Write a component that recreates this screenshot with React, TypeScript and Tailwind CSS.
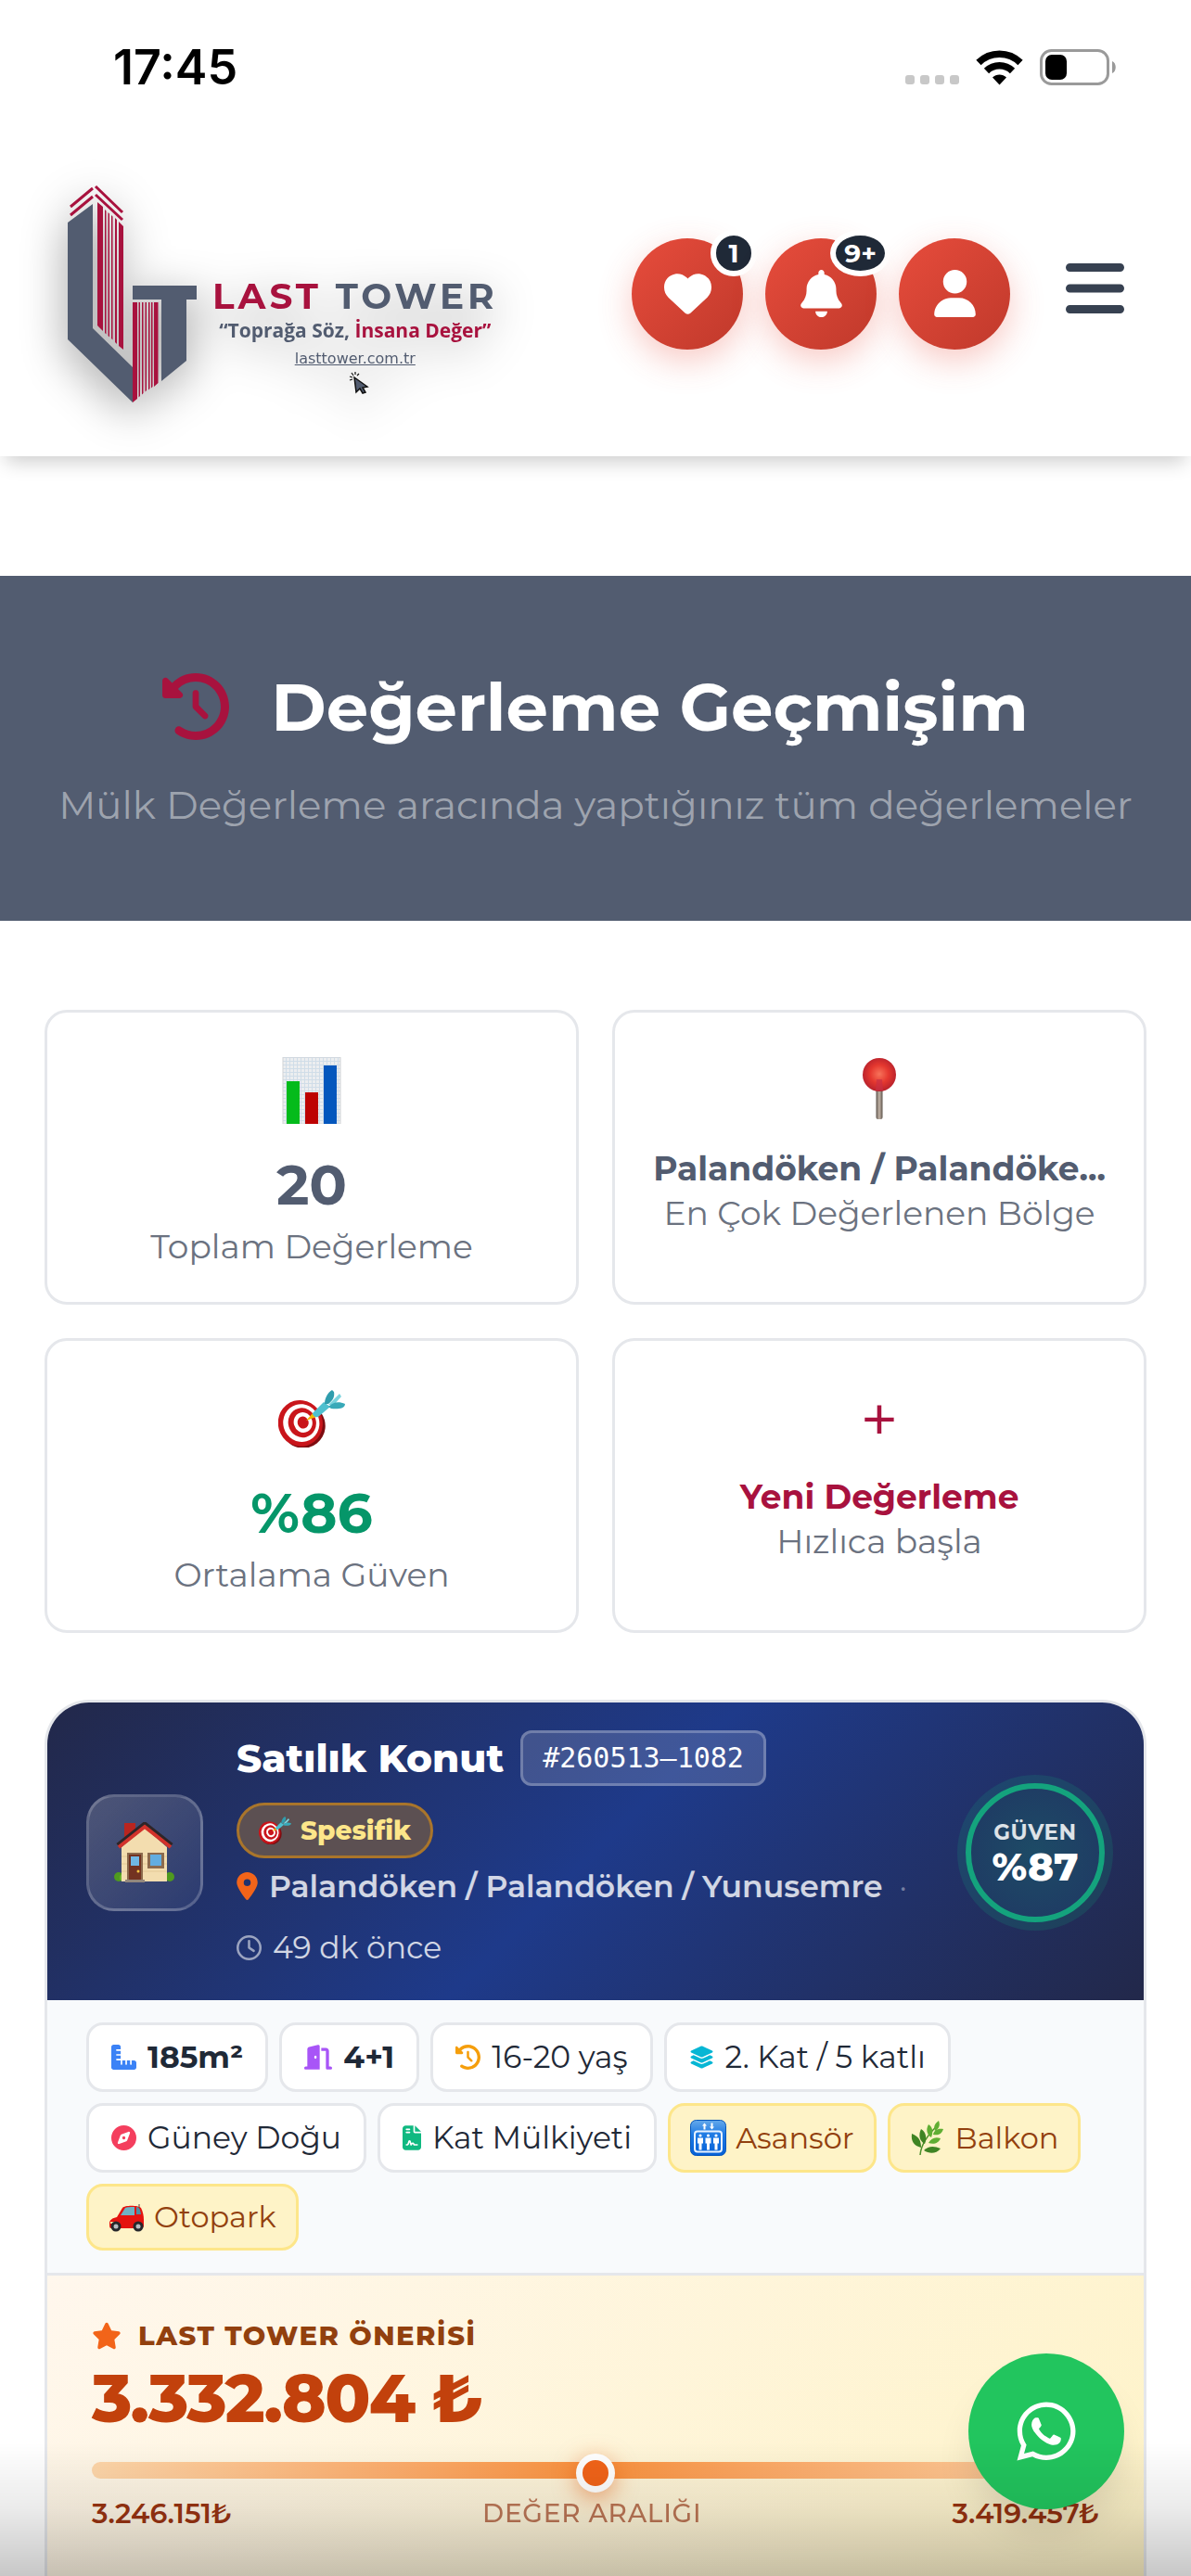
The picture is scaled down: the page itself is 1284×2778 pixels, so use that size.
import type { ReactNode } from "react";
import {
  FaBars,
  FaBell,
  FaClockRotateLeft,
  FaCompass,
  FaDoorOpen,
  FaFileContract,
  FaHeart,
  FaLayerGroup,
  FaLocationDot,
  FaRegClock,
  FaRulerCombined,
  FaStar,
  FaUser,
  FaWhatsapp,
} from "react-icons/fa6";

/* ---------- illustrations ---------- */

function ChartEmoji({ className }: { className?: string }) {
  return (
    <svg viewBox="0 0 72 72" className={className} aria-hidden="true">
      <defs>
        <pattern id="chart-grid" width="4" height="4" patternUnits="userSpaceOnUse">
          <rect width="4" height="4" fill="#eceef0" />
          <path d="M0 .5h4M.5 0v4" stroke="#d0dde8" strokeWidth="1" />
        </pattern>
      </defs>
      <rect x="5" y="0" width="62" height="72" fill="url(#chart-grid)" stroke="#d2d4d6" />
      <rect x="9" y="26" width="14" height="46" fill="#04bb1b" />
      <rect x="29" y="38" width="14" height="34" fill="#bd0202" />
      <rect x="49" y="9" width="14" height="63" fill="#0457bd" />
    </svg>
  );
}

function PinEmoji({ className }: { className?: string }) {
  return (
    <svg viewBox="0 0 72 72" className={className} aria-hidden="true">
      <defs>
        <radialGradient id="pin-head" cx="50%" cy="48%" r="55%">
          <stop offset="0" stopColor="#f7735a" />
          <stop offset="0.5" stopColor="#e5382f" />
          <stop offset="1" stopColor="#b31f2c" />
        </radialGradient>
        <linearGradient id="pin-stem">
          <stop offset="0" stopColor="#5d534c" />
          <stop offset="0.5" stopColor="#c4b5a8" />
          <stop offset="1" stopColor="#5d534c" />
        </linearGradient>
      </defs>
      <rect x="32.500" y="33" width="7" height="34" rx="2" fill="url(#pin-stem)" />
      <circle cx="36" cy="19" r="18" fill="url(#pin-head)" />
      <path d="M33 24h6l1 12h-8z" fill="#c92f45" opacity="0.7" />
    </svg>
  );
}

function TargetEmoji({ className }: { className?: string }) {
  return (
    <svg viewBox="0 0 72 62" className={className} aria-hidden="true">
      <g transform="rotate(-16 27 36)">
        <ellipse cx="26" cy="38.500" rx="24" ry="24" fill="#7d0c10" />
        <ellipse cx="24" cy="35" rx="24" ry="25" fill="#c9151b" />
        <ellipse cx="25" cy="35" rx="19.500" ry="20.500" fill="#fff" />
        <ellipse cx="26" cy="35" rx="15" ry="16" fill="#c9151b" />
        <ellipse cx="27" cy="35" rx="10" ry="11" fill="#fff" />
        <ellipse cx="27" cy="35" rx="6" ry="6.500" fill="#c9151b" />
      </g>
      <path d="M30 33l7-8 4 4z" fill="#f2b705" />
      <path d="M37 25l12-12 7 5-13 11c-3 1-6-1-6-4z" fill="#4fc0cf" />
      <path d="M50 15c0-6 3-12 8-15l2 2c1 5-1 9-6 13z" fill="#2f9dad" />
      <path d="M54 16l12-12 2 3-8 9z" fill="#7ad3dd" />
      <path d="M54 18c5-5 11-6 18-3 0 5-8 6-15 5z" fill="#38a9b8" />
    </svg>
  );
}

function HouseEmoji({ className }: { className?: string }) {
  return (
    <svg viewBox="0 0 66 66" className={className} aria-hidden="true">
      <circle cx="5" cy="59" r="5" fill="#4f9a1e" />
      <circle cx="10" cy="60" r="4" fill="#6bb32b" />
      <circle cx="60" cy="59" r="5" fill="#4f9a1e" />
      <path d="M11 1h12v14l-12 9z" fill="#b9251f" />
      <path d="M8 27L33 6l24 21v37H8z" fill="#f3ddaf" />
      <path d="M8 37h49M8 45h49M8 53h49" stroke="#e4ca97" strokeWidth="1" />
      <path d="M4 25L33 2l29 23" fill="none" stroke="#2e2528" strokeWidth="5" />
      <path d="M5 27L33 5l28 22" fill="none" stroke="#d2322b" strokeWidth="4" />
      <rect x="14" y="33" width="17" height="31" fill="#8c6a4d" />
      <rect x="16" y="35" width="13" height="29" fill="#733321" />
      <rect x="18" y="37" width="9" height="10" fill="#70b8e4" />
      <circle cx="26" cy="53" r="1.500" fill="#f5c542" />
      <rect x="36" y="33" width="18" height="17" fill="#8c6a4d" />
      <rect x="39" y="35" width="12" height="12" fill="#62ade0" />
      <rect x="12" y="62" width="21" height="3" fill="#93877c" />
    </svg>
  );
}

function ElevatorEmoji({ className }: { className?: string }) {
  return (
    <svg viewBox="0 0 39 39" className={className} aria-hidden="true">
      <defs>
        <linearGradient id="elevator-bg" x2="0" y2="1">
          <stop offset="0" stopColor="#65a9ea" />
          <stop offset="0.4" stopColor="#1f7be4" />
          <stop offset="1" stopColor="#0560d6" />
        </linearGradient>
      </defs>
      <rect x="0.5" y="0.5" width="38" height="38" rx="6" fill="url(#elevator-bg)" stroke="#0757bb" />
      <path d="M15.500 3.500l2.500 3h-1.500v4h-2v-4H13zM23.500 10.500l2.500-3h-1.500v-4h-2v4H21z" fill="#fff" />
      <rect x="5" y="12.500" width="29" height="22" rx="3" fill="none" stroke="#e9f3ff" strokeWidth="2" />
      {[11, 19.5, 28].map((x) => (
        <g key={x} fill="#fff">
          <circle cx={x} cy="17" r="1.600" />
          <path d={`M${x - 3} 19.500h6v6h-1.500v7h-3v-7h-1.500z`} />
        </g>
      ))}
    </svg>
  );
}

function HerbEmoji({ className }: { className?: string }) {
  return (
    <svg viewBox="0 0 39 39" className={className} aria-hidden="true">
      <path d="M11 38c1-12 8-22 20-33" fill="none" stroke="#4c8f2a" strokeWidth="1.500" />
      <g fill="#5fae33">
        <path d="M31 1c2 5 0 9-4 11-2-5 0-8 4-11z" />
        <path d="M20 5c5 3 5 9 3 14-5-3-6-9-3-14z" />
        <path d="M36 10c-2 6-6 7-11 6 1-5 5-7 11-6z" />
        <path d="M33 20c-2 5-7 7-13 5 3-5 7-7 13-5z" />
      </g>
      <g fill="#3f8424">
        <path d="M12 10c6 4 6 10 4 16-6-3-7-10-4-16z" />
        <path d="M2 15c8 3 10 8 10 15C4 28 1 23 2 15z" />
        <path d="M33 31c-5 6-12 6-18 2 5-5 11-5 18-2z" />
      </g>
    </svg>
  );
}

function CarEmoji({ className }: { className?: string }) {
  return (
    <svg viewBox="0 0 39 31" className={className} aria-hidden="true">
      <path d="M33 1v4" stroke="#444" strokeWidth="1" />
      <path d="M1 22c0-4 3-6 8-7l6-10c2-3 17-3 20 0 2 4 3 8 3 13v6c0 2-1 3-3 3H3c-2 0-2-2-2-5z" fill="#e5130f" />
      <path d="M13 13l5-8c1-1 7-1 10-1v9z" fill="#6fb2c4" />
      <path d="M30 4c3 0 4 2 5 8h-5z" fill="#4f8ea2" />
      <path d="M2 21h8" stroke="#fbe3a2" strokeWidth="2" />
      <circle cx="8" cy="25" r="5.500" fill="#26272b" />
      <circle cx="8" cy="25" r="2.500" fill="#b8bcc2" />
      <circle cx="32" cy="25" r="5.500" fill="#26272b" />
      <circle cx="32" cy="25" r="2.500" fill="#b8bcc2" />
    </svg>
  );
}

function LogoMark({ className }: { className?: string }) {
  return (
    <svg viewBox="0 0 141 236" className={className} aria-hidden="true">
      <g fill="#525c70">
        <path d="M1 41L28 21V155L71 197V235L1 167Z" />
        <path d="M71 109H140V124H129V190L102 212V124H71Z" />
      </g>
      <g fill="none" stroke="#a8123e" strokeWidth="3">
        <path d="M4 24L28 4M31 2L60 30M4 33L28 13M31 11L60 38" />
      </g>
      <g fill="#a8123e">
        <path d="M33 19l6 5v134l-6-6zM41 27l1.500 1.500v133l-1.500-1.500zM44.500 30l1.500 1.500v133l-1.500-1.500zM48 33l1.500 1.500v133l-1.500-1.500zM52 36l2 2v134l-2-2zM56 40l5 5v133l-5-4z" />
        <path d="M71 127h5v104l-5 4zM77.500 127h1.500v101l-1.500 1.500zM81 127h1.500v98l-1.500 1.500zM84.500 127h1.500v95l-1.500 1.500zM88 127h1.500v93l-1.500 1.500zM91 127h1.500v91l-1.500 1.500zM94 127h4.500v87l-4.500 4z" />
      </g>
    </svg>
  );
}

function ClickIcon({ className }: { className?: string }) {
  return (
    <svg viewBox="0 0 22 24" className={className} aria-hidden="true">
      <path d="M1 5l3 1M3 1l2 3M7 0v3M11 2L9 4M1 9l3-1" stroke="#111" strokeWidth="1.200" />
      <path d="M6 6l14 10-5 1 3 5-3 1-3-5-4 4z" fill="#525c70" stroke="#111" strokeWidth="1.500" />
    </svg>
  );
}

/* ---------- status bar + header ---------- */

function StatusBar() {
  return (
    <div className="flex h-[141px] items-center justify-between pr-20 pl-[122px] pt-1">
      <span className="font-['Inter',sans-serif] text-[52px] leading-none font-semibold text-black">17:45</span>
      <div className="flex items-center gap-[18px]">
        <svg viewBox="0 0 58 38" className="h-[38px] w-[58px]" fill="#c8c8c8" aria-hidden="true">
          <rect x="0" y="27" width="10" height="10" rx="3" />
          <rect x="16" y="27" width="10" height="10" rx="3" />
          <rect x="32" y="27" width="10" height="10" rx="3" />
          <rect x="48" y="27" width="10" height="10" rx="3" />
        </svg>
        <svg viewBox="0 0 51 38" className="h-[38px] w-[51px]" aria-hidden="true">
          <path d="M3 13.500a32 32 0 0 1 45 0M11.500 22.500a20 20 0 0 1 28 0" fill="none" stroke="#000" strokeWidth="7.500" />
          <path d="M25.500 37.500l-7.500-8c4-4 11-4 15 0z" />
        </svg>
        <svg viewBox="0 0 83 39" className="h-[39px] w-[83px]" aria-hidden="true">
          <rect x="1.500" y="1.500" width="72" height="36" rx="11" fill="none" stroke="#9a9a9a" strokeWidth="3" />
          <rect x="6" y="6" width="23" height="27" rx="7" />
          <path d="M78 13c5 2 5 11 0 13z" fill="#9a9a9a" />
        </svg>
      </div>
    </div>
  );
}

function RoundButton({ label, badge, children }: { label: string; badge?: string; children: ReactNode }) {
  return (
    <button
      aria-label={label}
      className="relative flex size-[120px] items-center justify-center rounded-full bg-linear-135 from-[#e74c3c] to-[#c0392b] text-[51px] text-white shadow-[0_12px_36px_rgba(231,76,60,0.3)]"
    >
      {children}
      {badge && (
        <span className="absolute -top-[9px] -right-[15px] flex h-[50px] min-w-[50px] items-center justify-center rounded-[50%] border-6 border-white bg-[#1f2937] px-[9px] text-[28px] leading-none font-bold">
          {badge}
        </span>
      )}
    </button>
  );
}

function Header() {
  return (
    <header className="relative bg-white shadow-[0_12px_20px_-6px_rgba(0,0,0,0.2)]">
      <StatusBar />
      <div className="flex h-[351px] items-center justify-between px-18">
        <a
          href="#"
          aria-label="Last Tower"
          className="flex items-end gap-4 [filter:drop-shadow(0_12px_24px_rgba(0,0,0,0.4))]"
        >
          <LogoMark className="h-[236px] w-[141px]" />
          <span className="flex flex-col items-center pb-[10px]">
            <span className="text-[39px] leading-[40px] font-bold tracking-widest text-[#525c70]">
              <span className="text-[#a8123e]">LAST</span> TOWER
            </span>
            <span className="font-['Open_Sans',sans-serif] text-[21px] leading-[34px] font-bold text-[#525c70]">
              “Toprağa Söz, <span className="text-[#a8123e]">İnsana Değer”</span>
            </span>
            <span className="font-['DejaVu_Sans',sans-serif] text-[16px] leading-[28px] text-[#525c70] underline">
              lasttower.com.tr
            </span>
            <ClickIcon className="ml-2 h-6 w-[22px]" />
          </span>
        </a>

        <div className="flex items-center gap-6">
          <RoundButton label="Favoriler" badge="1">
            <FaHeart />
          </RoundButton>
          <RoundButton label="Bildirimler" badge="9+">
            <FaBell />
          </RoundButton>
          <RoundButton label="Hesabım">
            <FaUser />
          </RoundButton>
          <button aria-label="Menü" className="mb-3 ml-9 w-[63px] text-[72px] text-[#374151]">
            <FaBars className="w-[63px]" />
          </button>
        </div>
      </div>
    </header>
  );
}

/* ---------- stats ---------- */

const STATS = [
  { icon: <ChartEmoji className="size-[72px]" />, value: "20", label: "Toplam Değerleme", big: true, color: "text-[#525c70]" },
  { icon: <PinEmoji className="size-[72px]" />, value: "Palandöken / Palandöke...", label: "En Çok Değerlenen Bölge", big: false, color: "text-[#525c70]" },
  { icon: <TargetEmoji className="h-[62px] w-[72px]" />, value: "%86", label: "Ortalama Güven", big: true, color: "text-[#059669]" },
  { icon: "+", value: "Yeni Değerleme", label: "Hızlıca başla", big: false, color: "text-[#a8123e]" },
];

function Stats() {
  return (
    <section className="grid grid-cols-2 gap-9">
      {STATS.map((s) => (
        <div key={s.label} className="min-w-0 rounded-3xl border-3 border-[#e5e7eb] bg-white p-9 text-center">
          <div className={`flex h-24 items-center justify-center text-[72px] leading-none ${s.color}`}>{s.icon}</div>
          <p
            className={`mt-3 font-bold whitespace-nowrap ${s.color} ${
              s.big ? "text-[60px] leading-[84px]" : "text-[36px] leading-[48px]"
            }`}
          >
            {s.value}
          </p>
          <p className="text-[36px] leading-[48px] whitespace-nowrap text-[#6b7280]">{s.label}</p>
        </div>
      ))}
    </section>
  );
}

/* ---------- valuation card ---------- */

const FACTS = [
  { icon: <FaRulerCombined className="size-[27px] text-[#3b82f6]" />, text: "185m²", bold: true },
  { icon: <FaDoorOpen className="h-[27px] w-[30px] text-[#a855f7]" />, text: "4+1", bold: true },
  { icon: <FaClockRotateLeft className="size-[27px] text-[#f59e0b]" />, text: "16-20 yaş" },
  { icon: <FaLayerGroup className="size-[27px] text-[#06b6d4]" />, text: "2. Kat / 5 katlı" },
  { icon: <FaCompass className="size-[27px] text-[#f43f5e]" />, text: "Güney Doğu" },
  { icon: <FaFileContract className="h-[27px] w-[20px] text-[#10b981]" />, text: "Kat Mülkiyeti" },
];

const AMENITIES = [
  { icon: <ElevatorEmoji className="size-[39px]" />, text: "Asansör" },
  { icon: <HerbEmoji className="size-[39px]" />, text: "Balkon" },
  { icon: <CarEmoji className="h-[31px] w-[39px]" />, text: "Otopark" },
];

function CardHeader() {
  return (
    <div className="flex items-center gap-9 bg-linear-135 from-[#22284a] via-[#1e3a8a] to-[#22284a] px-[42px] pt-[30px] pb-[27px]">
      <div className="flex size-[126px] shrink-0 items-center justify-center rounded-[30px] border-3 border-white/20 bg-linear-135 from-white/20 to-white/5">
        <HouseEmoji className="size-[66px]" />
      </div>

      <div className="min-w-0 flex-1">
        <div className="flex flex-wrap items-center gap-x-[18px] gap-y-[18px]">
          <h2 className="text-[42px] leading-[60px] font-extrabold text-white">Satılık Konut</h2>
          <span className="rounded-xl border-3 border-white/25 bg-white/15 px-[21px] font-['DejaVu_Sans_Mono',monospace] text-[30px] leading-[54px] text-white">
            #260513–1082
          </span>
          <span className="flex items-center gap-[10px] rounded-full border-3 border-[#a9752b] bg-[#5c5052] px-[21px] text-[28px] leading-[54px] font-extrabold text-[#fde68a]">
            <TargetEmoji className="h-[30px] w-[35px]" />
            Spesifik
          </span>
        </div>
        <div className="flex flex-wrap items-center gap-x-[18px] gap-y-[6px] text-[33px] leading-[60px] text-white/80">
          <span className="flex items-center gap-3 font-semibold">
            <FaLocationDot className="h-[30px] w-[23px] text-[#f26419]" />
            Palandöken / Palandöken / Yunusemre
          </span>
          <span className="text-white/40">·</span>
          <span className="flex items-center gap-3">
            <FaRegClock className="size-[27px] text-white/55" />
            49 dk önce
          </span>
        </div>
      </div>

      <div className="flex size-[150px] shrink-0 flex-col items-center justify-center rounded-full border-6 border-[#14a37d] bg-radial from-[#1d4b66] to-[#1f3763] shadow-[0_0_0_9px_rgba(16,185,129,0.15)]">
        <span className="text-[23px] leading-[30px] font-bold tracking-wide text-white/85">GÜVEN</span>
        <span className="text-[42px] leading-[45px] font-extrabold text-white">%87</span>
      </div>
    </div>
  );
}

function PriceBlock() {
  return (
    <div className="flex-1 border-t-3 border-[#e5e7eb] bg-linear-135 from-[#fff7ed] to-[#fef3c7] px-12 pt-[42px]">
      <p className="flex items-center gap-[18px] text-[29px] leading-[45px] font-extrabold tracking-wider text-[#92400e]">
        <FaStar className="size-8 text-[#f26419]" />
        LAST TOWER ÖNERİSİ
      </p>
      <p className="text-[72px] leading-[90px] font-extrabold tracking-tight text-[#c2410c]">3.332.804 ₺</p>
      <div className="relative mt-6 h-[18px] rounded-full bg-linear-to-r from-[#fed7aa] via-[#fb923c] to-[#fed7aa]">
        <span className="absolute -top-[9px] left-1/2 size-[42px] -translate-x-1/2 rounded-full border-[7px] border-white bg-[#f26419] shadow-[0_6px_24px_rgba(234,88,12,0.5)]" />
      </div>
      <div className="mt-[18px] flex items-center justify-between text-[30px] leading-[39px] font-semibold text-[#9a3412]">
        <span>3.246.151₺</span>
        <span className="text-[28px] font-medium tracking-wide opacity-65">DEĞER ARALIĞI</span>
        <span>3.419.457₺</span>
      </div>
    </div>
  );
}

function ValuationCard() {
  return (
    <article className="mt-18 flex flex-1 flex-col overflow-hidden rounded-t-[48px] border-3 border-b-0 border-[#e5e7eb]">
      <CardHeader />
      <div className="flex flex-wrap gap-3 bg-[#f8fafc] px-[42px] py-6">
        {FACTS.map((f) => (
          <span
            key={f.text}
            className={`flex items-center gap-3 rounded-[18px] border-3 border-[#e5e7eb] bg-white px-6 py-[9px] text-[33px] leading-[51px] text-[#1f2937] ${
              f.bold ? "font-bold" : "font-normal"
            }`}
          >
            {f.icon}
            {f.text}
          </span>
        ))}
        {AMENITIES.map((a) => (
          <span
            key={a.text}
            className="flex items-center gap-[10px] rounded-[18px] border-3 border-[#fde68a] bg-[#fef3c7] px-[21px] py-[9px] text-[32px] leading-[48px] text-[#92400e]"
          >
            {a.icon}
            {a.text}
          </span>
        ))}
      </div>
      <PriceBlock />
    </article>
  );
}

export default function App() {
  return (
    <div className="flex min-h-screen flex-col bg-white font-['Montserrat','Inter','Liberation_Sans',sans-serif]">
      <Header />

      <section className="mt-[129px] bg-[#525c70] px-12 pt-24 pb-[93px] text-center">
        <h1 className="flex items-center justify-center gap-[45px] text-[72px] leading-[90px] font-bold text-white">
          <FaClockRotateLeft className="text-[#a8123e]" />
          Değerleme Geçmişim
        </h1>
        <p className="mt-[30px] text-[42px] leading-[63px] text-white/45">
          Mülk Değerleme aracında yaptığınız tüm değerlemeler
        </p>
      </section>

      <main className="flex flex-1 flex-col px-12 pt-24">
        <Stats />
        <ValuationCard />
      </main>

      {/* bottom fade under the home indicator */}
      <div className="pointer-events-none fixed inset-x-0 bottom-0 z-10 h-36 bg-linear-to-t from-black/22 via-black/8 to-transparent" />

      <a
        href="#"
        aria-label="WhatsApp"
        className="fixed right-18 bottom-18 flex size-[168px] items-center justify-center rounded-full bg-[#22c55e] text-[72px] text-white shadow-[0_30px_45px_-9px_rgba(0,0,0,0.12)]"
      >
        <FaWhatsapp />
      </a>
    </div>
  );
}
